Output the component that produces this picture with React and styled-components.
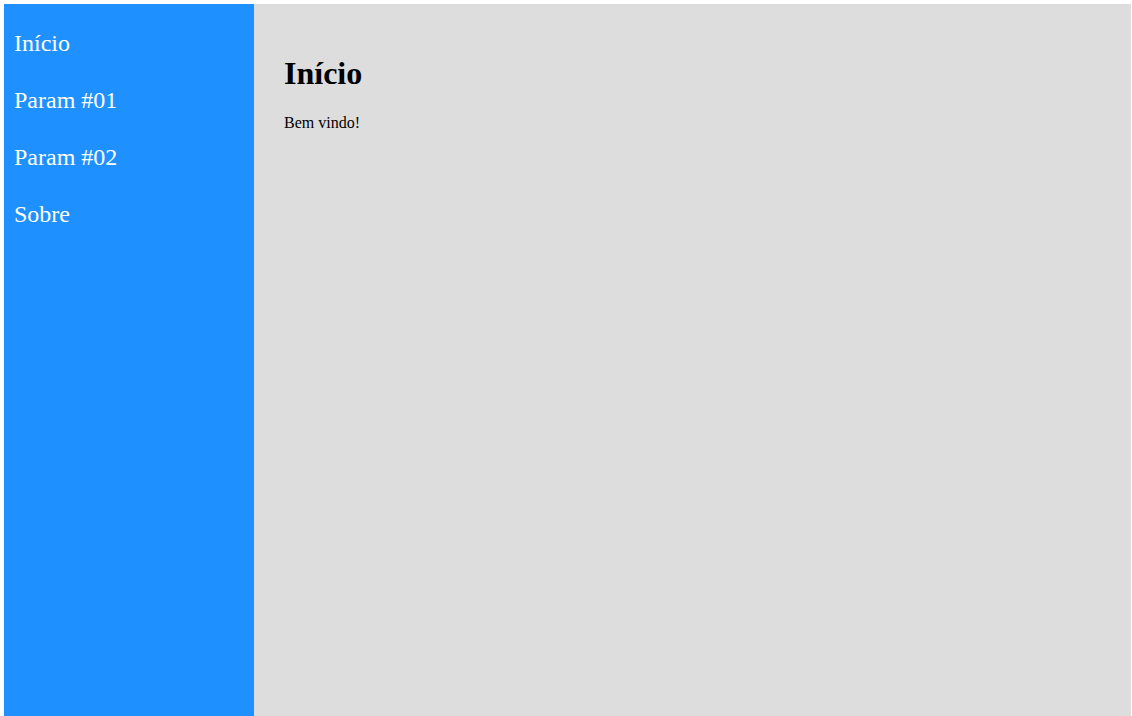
import React from "react";
import styled, { createGlobalStyle } from "styled-components";

const GlobalStyle = createGlobalStyle`
  body {
    margin: 4px 1px 0 4px;
    font-family: "Liberation Serif", "Times New Roman", serif;
    background: #ffffff;
    overflow: hidden;
  }
`;

const Container = styled.div`
  display: flex;
  height: 100vh;
`;

const Sidebar = styled.nav`
  width: 250px;
  flex-shrink: 0;
  background-color: dodgerblue;
  padding: 11px 0 10px;
  box-sizing: border-box;
`;

const NavLink = styled.a`
  display: block;
  padding: 15px 10px;
  font-size: 24px;
  line-height: 27px;
  color: #ffffff;
  text-decoration: none;
  cursor: pointer;
`;

const Content = styled.main`
  flex: 1;
  background-color: #dddddd;
  padding: 30px;
`;

const Title = styled.h1`
  font-size: 32px;
  margin: 21px 0 22px;
`;

const Text = styled.p`
  font-size: 16px;
  margin: 16px 0;
`;

const links = ["Início", "Param #01", "Param #02", "Sobre"];

export default function App() {
  return (
    <>
      <GlobalStyle />
      <Container>
        <Sidebar>
          {links.map((label) => (
            <NavLink key={label}>{label}</NavLink>
          ))}
        </Sidebar>
        <Content>
          <Title>Início</Title>
          <Text>Bem vindo!</Text>
        </Content>
      </Container>
    </>
  );
}
